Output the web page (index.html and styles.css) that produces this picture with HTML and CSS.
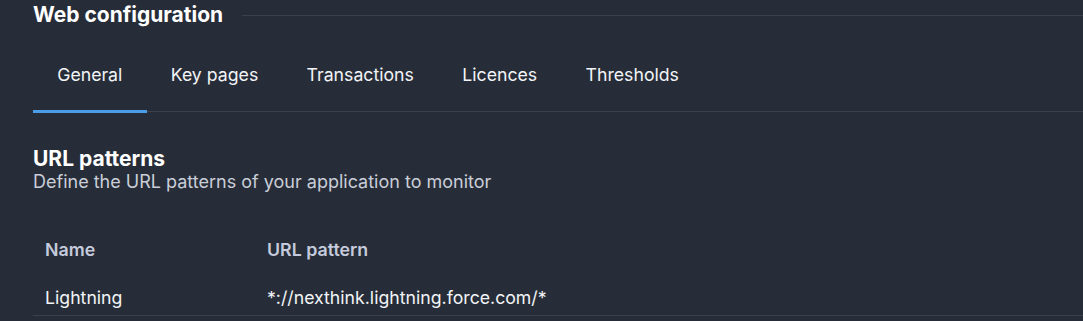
FILE: index.html
```html
<!DOCTYPE html>
<html lang="en">
<head>
<meta charset="utf-8">
<title>Web configuration</title>
<link rel="stylesheet" href="styles.css">
</head>
<body>
<div class="page">
  <header class="page-header">
    <h1 class="page-title">Web configuration</h1>
    <div class="header-rule"></div>
  </header>
  <nav class="tabs">
    <a class="tab tab-active">General</a>
    <a class="tab">Key pages</a>
    <a class="tab">Transactions</a>
    <a class="tab">Licences</a>
    <a class="tab">Thresholds</a>
  </nav>
  <section class="section">
    <h2 class="section-title">URL patterns</h2>
    <p class="section-desc">Define the URL patterns of your application to monitor</p>
    <div class="table">
      <div class="row row-head">
        <div class="cell cell-name">Name</div>
        <div class="cell">URL pattern</div>
      </div>
      <div class="row row-body">
        <div class="cell cell-name">Lightning</div>
        <div class="cell">*://nexthink.lightning.force.com/*</div>
      </div>
    </div>
  </section>
</div>
</body>
</html>
```
FILE: styles.css
```css
* { box-sizing: border-box; }
html, body { margin: 0; padding: 0; }
body {
  background: #272d38;
  color: #f2f4f7;
  font-family: Inter, "Noto Sans", sans-serif;
  overflow: hidden;
}
.page { padding-left: 33px; }
.page-header {
  display: flex;
  align-items: center;
  height: 30px;
}
.page-title {
  margin: 0;
  font-size: 21px;
  font-weight: 700;
  line-height: 30px;
  color: #ffffff;
}
.header-rule {
  flex: 1;
  height: 1px;
  background: #3a404c;
  margin-left: 19px;
}
.tabs {
  display: flex;
  margin-top: 7px;
  border-bottom: 1px solid #3a404c;
}
.tab {
  position: relative;
  display: flex;
  align-items: center;
  height: 74px;
  padding: 0 24.2px;
  font-size: 17.7px;
  color: #f2f4f7;
}
.tab-active::after {
  content: "";
  position: absolute;
  left: 0;
  right: 0;
  bottom: -2px;
  height: 3px;
  background: #4a9de6;
}
.section { padding-top: 35px; }
.section-title {
  margin: 0;
  font-size: 21px;
  font-weight: 700;
  line-height: 24px;
  color: #ffffff;
}
.section-desc {
  margin: 0;
  font-size: 18px;
  line-height: 22px;
  color: #c9ced8;
}
.table { margin-top: 36px; }
.row {
  display: flex;
}
.row-head {
  height: 40px;
  align-items: center;
  font-size: 17.8px;
  font-weight: 600;
  color: #c5cbdc;
}
.row-body {
  height: 47px;
  padding-top: 10px;
  align-items: center;
  font-size: 17.7px;
  color: #f2f4f7;
  border-bottom: 1px solid #3a404c;
}
.cell { padding: 0 12px; }
.cell-name { width: 222px; }
```
